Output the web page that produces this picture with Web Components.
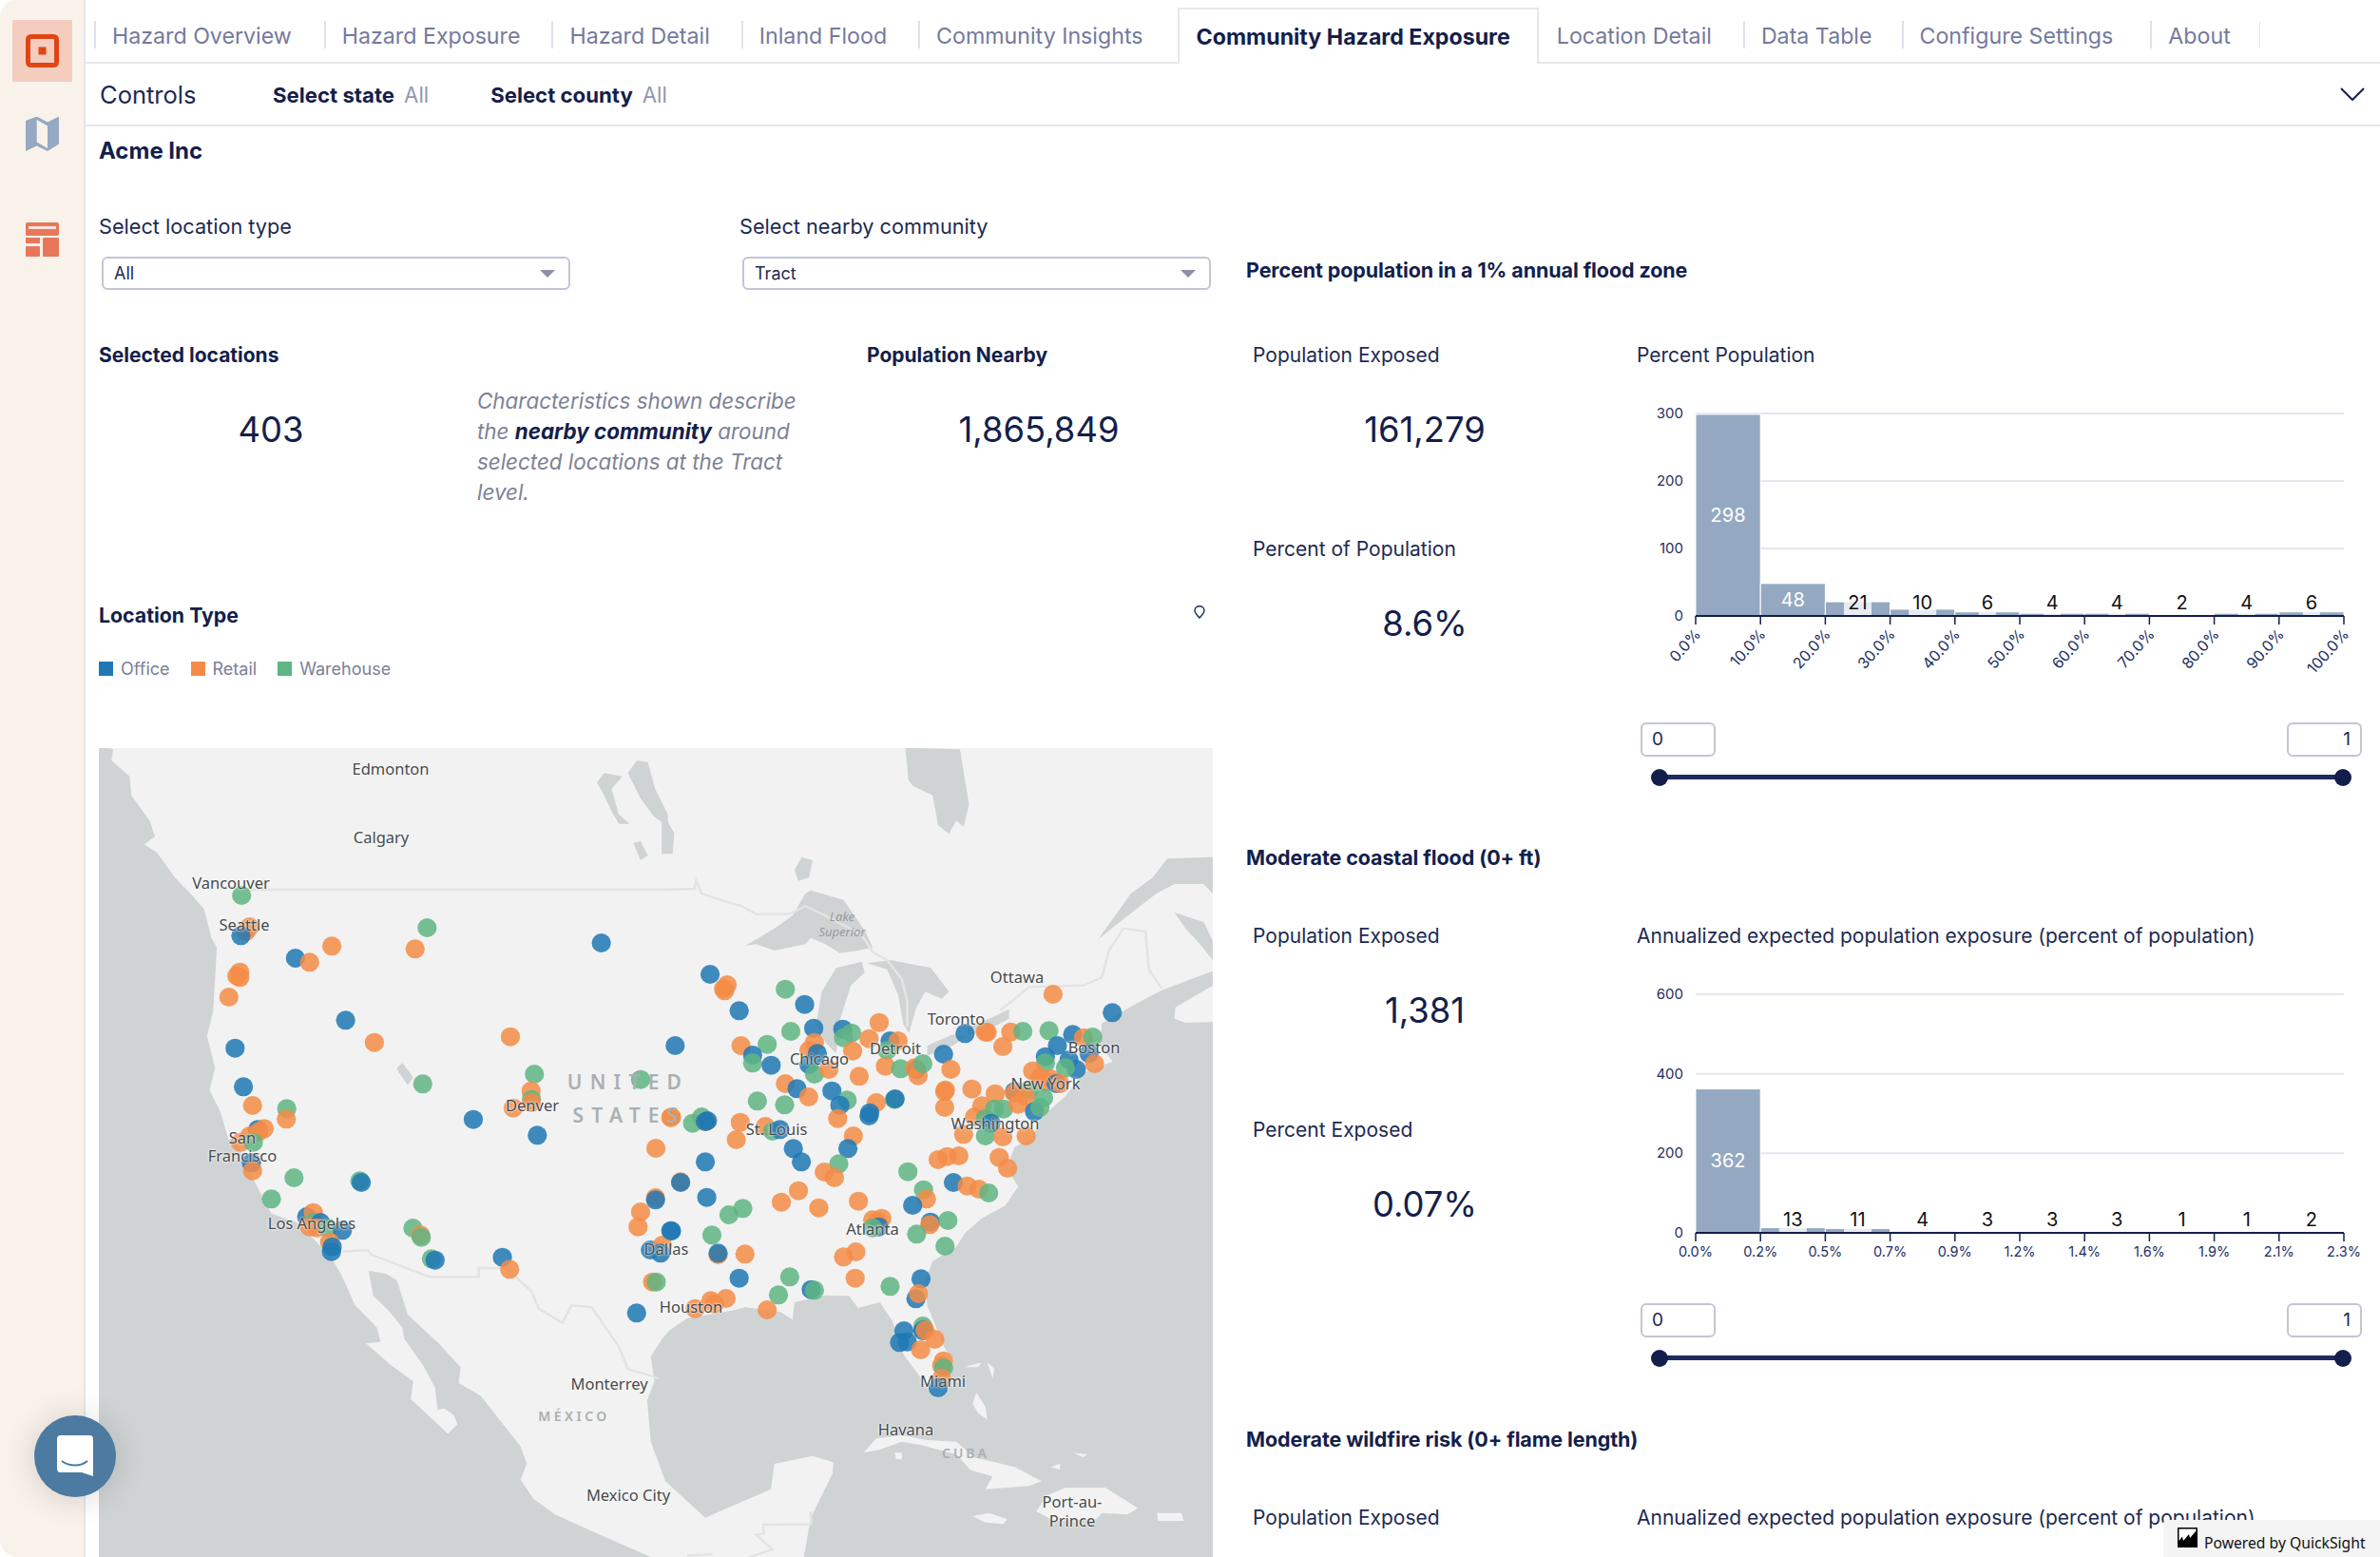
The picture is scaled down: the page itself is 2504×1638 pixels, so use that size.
<!DOCTYPE html>
<html lang="en">
<head>
<meta charset="utf-8">
<title>Community Hazard Exposure</title>
<style>
  html, body { margin: 0; background: #fff; }
  body { font-family: Inter, "Liberation Sans", sans-serif; color: #141e4b; }
</style>
</head>
<body>
<qs-app>
  <qs-sidebar slot="side"></qs-sidebar>
  <qs-tabs slot="top">
    <qs-tab pad="34">Hazard Overview</qs-tab>
    <qs-tab pad="33">Hazard Exposure</qs-tab>
    <qs-tab pad="33">Hazard Detail</qs-tab>
    <qs-tab pad="33">Inland Flood</qs-tab>
    <qs-tab pad="36">Community Insights</qs-tab>
    <qs-tab active pad="28">Community Hazard Exposure</qs-tab>
    <qs-tab nosep pad="33">Location Detail</qs-tab>
    <qs-tab pad="31">Data Table</qs-tab>
    <qs-tab pad="39">Configure Settings</qs-tab>
    <qs-tab pad="31" last>About</qs-tab>
  </qs-tabs>
  <qs-controls slot="top">
    <qs-control name="Select state" value="All"></qs-control>
    <qs-control name="Select county" value="All"></qs-control>
  </qs-controls>
  <qs-location-panel slot="left"></qs-location-panel>
  <qs-exposure slot="right" title="Percent population in a 1% annual flood zone" top="136" gap="60" height="618"
    k1="Population Exposed" v1="161,279" k2="Percent of Population" v2="8.6%" chart="Percent Population">
    <qs-histogram max="300" step="100" scale="0.7117" rotate
      values="298,48,21,10,6,4,4,2,4,6" white="2"
      ticks="0.0%,10.0%,20.0%,30.0%,40.0%,50.0%,60.0%,70.0%,80.0%,90.0%,100.0%"></qs-histogram>
    <qs-range></qs-range>
  </qs-exposure>
  <qs-exposure slot="right" title="Moderate coastal flood (0+ ft)" gap="53" height="612"
    k1="Population Exposed" v1="1,381" k2="Percent Exposed" v2="0.07%"
    chart="Annualized expected population exposure (percent of population)">
    <qs-histogram max="600" step="200" scale="0.4183" label-y="283" base="297"
      values="362,13,11,4,3,3,3,1,1,2" white="1"
      ticks="0.0%,0.2%,0.5%,0.7%,0.9%,1.2%,1.4%,1.6%,1.9%,2.1%,2.3%"></qs-histogram>
    <qs-range></qs-range>
  </qs-exposure>
  <qs-exposure slot="right" title="Moderate wildfire risk (0+ flame length)" gap="53" height="200"
    k1="Population Exposed" chart="Annualized expected population exposure (percent of population)"></qs-exposure>
  <qs-chat slot="over"></qs-chat>
  <qs-powered slot="over"></qs-powered>
</qs-app>

<script>
const NAVY = "#141e4b";
const FONT = 'Inter, "Liberation Sans", sans-serif';

class QsApp extends HTMLElement {
  constructor() {
    super();
    this.attachShadow({ mode: "open" }).innerHTML = `
      <style>
        :host { display: grid; grid-template-columns: 90px 1fr; height: 1638px; width: 2504px; overflow: hidden; position: relative; font-family: ${FONT}; color: ${NAVY}; }
        .main { min-width: 0; display: flex; flex-direction: column; }
        .sheet { display: grid; grid-template-columns: 1172px 1fr; column-gap: 35px; padding-left: 14px; min-height: 0; }
        .right { min-width: 0; }
      </style>
      <slot name="side"></slot>
      <div class="main">
        <slot name="top"></slot>
        <div class="sheet">
          <div><slot name="left"></slot></div>
          <div class="right"><slot name="right"></slot></div>
        </div>
      </div>
      <slot name="over"></slot>`;
  }
}

class QsSidebar extends HTMLElement {
  constructor() {
    super();
    this.attachShadow({ mode: "open" }).innerHTML = `
      <style>
        :host { display: flex; flex-direction: column; box-sizing: border-box; background: #f9f2eb; border-right: 2px solid #e4e6ec; border-radius: 18px 0 0 18px; height: 1638px; padding-top: 21px; }
        .item { width: 63px; margin-left: 13px; display: flex; align-items: center; justify-content: center; }
        .active { height: 65px; background: #f4cdbf; }
        .map { margin-top: 36px; height: 38px; }
        .grid { margin-top: 73px; height: 38px; }
        svg { display: block; }
      </style>
      <div class="item active">
        <svg width="35" height="35" viewBox="0 0 35 35"><rect x="2.5" y="2.5" width="30" height="30" rx="3" fill="none" stroke="#e04514" stroke-width="5"/><rect x="13.5" y="13.5" width="8" height="8" fill="#e04514"/></svg>
      </div>
      <div class="item map">
        <svg width="35" height="36" viewBox="0 0 35 36"><path d="M0 4.500 11.700 0 23 6 35 0V28L23 35.500 11.700 30 0 35.500Z" fill="#95a9c3" stroke="#95a9c3" stroke-linejoin="round"/><path d="M11.700 3 23 9.500V33L11.700 26.500Z" fill="#f9f2eb"/></svg>
      </div>
      <div class="item grid">
        <svg width="35" height="36" viewBox="0 0 35 36"><rect width="35" height="14" rx="2" fill="#e8775a"/><rect x="3" y="4" width="29" height="3" fill="#f9e3da"/><rect y="16" width="15" height="6" fill="#e8775a"/><rect y="25" width="15" height="11" rx="1" fill="#e8775a"/><rect x="18" y="16" width="17" height="20" rx="1" fill="#e8775a"/></svg>
      </div>`;
  }
}

class QsTabs extends HTMLElement {
  constructor() {
    super();
    this.attachShadow({ mode: "open" }).innerHTML = `
      <style>
        :host { display: flex; height: 65px; padding-left: 9px; border-bottom: 2px solid #e6e8ee; box-sizing: content-box; }
      </style>
      <slot></slot>`;
  }
}

class QsTab extends HTMLElement {
  constructor() {
    super();
    this.attachShadow({ mode: "open" }).innerHTML = `
      <style>
        :host { display: flex; align-items: center; height: 65px; box-sizing: border-box; position: relative; padding: 10px var(--pad, 34px) 0 19px; font-size: 23.2px; color: #747a9c; white-space: nowrap; }
        :host::before { content: ""; position: absolute; left: 0; top: 22px; height: 29px; width: 2px; background: #dfe2ea; }
        :host([nosep])::before { display: none; }
        :host([last])::after { content: ""; position: absolute; right: 0; top: 22px; height: 29px; width: 1px; background: #e6e8ee; }
        :host([active]) { height: 59px; margin-top: 8px; padding-top: 0; padding-bottom: 0; color: ${NAVY}; font-weight: 700; background: #fff; border: 2px solid #e6e8ee; border-bottom: 0; padding-left: 18px; }
        :host([active])::before { display: none; }
      </style>
      <slot></slot>`;
  }
  connectedCallback() {
    this.style.setProperty("--pad", (this.getAttribute("pad") || 34) + "px");
  }
}

class QsControls extends HTMLElement {
  constructor() {
    super();
    this.attachShadow({ mode: "open" }).innerHTML = `
      <style>
        :host { display: flex; align-items: center; height: 64px; padding-left: 15px; padding-right: 16px; border-bottom: 2px solid #e6e8ee; }
        .title { font-size: 25.5px; color: #1d2a52; width: 182px; }
        .list { display: flex; gap: 65px; flex: 1; }
        svg { display: block; }
      </style>
      <div class="title">Controls</div>
      <div class="list"><slot></slot></div>
      <svg width="26" height="14" viewBox="0 0 26 14"><path d="M1 1 13 13 25 1" fill="none" stroke="${NAVY}" stroke-width="2"/></svg>`;
  }
}

class QsControl extends HTMLElement {
  constructor() {
    super();
    this.attachShadow({ mode: "open" }).innerHTML = `
      <style>
        :host { display: inline-flex; gap: 10px; font-size: 22.2px; align-items: baseline; }
        b { font-weight: 700; color: ${NAVY}; }
        span { color: #9297b0; }
      </style>
      <b></b><span></span>`;
  }
  connectedCallback() {
    this.shadowRoot.querySelector("b").textContent = this.getAttribute("name");
    this.shadowRoot.querySelector("span").textContent = this.getAttribute("value");
  }
}

class QsSelect extends HTMLElement {
  constructor() {
    super();
    this.attachShadow({ mode: "open" }).innerHTML = `
      <style>
        :host { display: block; }
        .label { font-size: 21.7px; line-height: 30px; color: #1d2a52; margin-bottom: 17px; }
        .box { margin-left: 3px; width: 493px; height: 35px; box-sizing: border-box; border: 2px solid #c3c5d6; border-radius: 6px; display: flex; align-items: center; justify-content: space-between; padding: 0 14px 0 11px; font-size: 18px; color: #1d2a52; }
        .caret { width: 0; height: 0; border-left: 8px solid transparent; border-right: 8px solid transparent; border-top: 8px solid #8c90a8; }
      </style>
      <div class="label"></div>
      <div class="box"><span class="val"></span><span class="caret"></span></div>`;
  }
  connectedCallback() {
    this.shadowRoot.querySelector(".label").textContent = this.getAttribute("label");
    this.shadowRoot.querySelector(".val").textContent = this.getAttribute("value");
  }
}

class QsKpi extends HTMLElement {
  constructor() {
    super();
    this.attachShadow({ mode: "open" }).innerHTML = `
      <style>
        :host { display: block; width: 362px; }
        .label { font-size: 21px; line-height: 30px; color: #1d2a52; }
        :host([strong]) .label { font-weight: 700; color: ${NAVY}; }
        .val { margin-top: 38px; height: 50px; line-height: 50px; font-size: 36.4px; text-align: center; color: ${NAVY}; }
      </style>
      <div class="label"></div>
      <div class="val"></div>`;
  }
  connectedCallback() {
    this.shadowRoot.querySelector(".label").textContent = this.getAttribute("label");
    this.shadowRoot.querySelector(".val").textContent = this.getAttribute("value") || "";
  }
}

class QsLocationPanel extends HTMLElement {
  constructor() {
    super();
    this.attachShadow({ mode: "open" }).innerHTML = `
      <style>
        :host { display: block; }
        h2 { margin: 0; font-size: 24px; line-height: 52px; font-weight: 700; color: ${NAVY}; }
        .filters { margin-top: 38px; display: grid; grid-template-columns: 674px 1fr; }
        .stats { margin-top: 54px; display: grid; grid-template-columns: 362px 374px 362px; column-gap: 36px; height: 273px; }
        .note { margin: 47px 0 0; font-size: 22.4px; line-height: 32px; font-style: italic; color: #7c8296; }
        .note div { white-space: nowrap; }
        .note b { color: ${NAVY}; }
        .type { display: flex; justify-content: space-between; align-items: center; height: 30px; font-size: 21.3px; font-weight: 700; padding-right: 8px; }
        .type svg { margin-top: -7px; }
        .legend { margin-top: 29px; height: 24px; display: flex; gap: 22px; font-size: 18px; color: #7a8099; align-items: center; }
        .legend span { display: flex; align-items: center; gap: 8px; }
        .legend i { width: 15px; height: 15px; display: block; }
        qs-map { margin-top: 72px; }
      </style>
      <h2>Acme Inc</h2>
      <div class="filters">
        <qs-select label="Select location type" value="All"></qs-select>
        <qs-select label="Select nearby community" value="Tract"></qs-select>
      </div>
      <div class="stats">
        <qs-kpi strong label="Selected locations" value="403"></qs-kpi>
        <div class="note">
          <div>Characteristics shown describe</div>
          <div>the <b>nearby community</b> around</div>
          <div>selected locations at the Tract</div>
          <div>level.</div>
        </div>
        <qs-kpi strong label="Population Nearby" value="1,865,849"></qs-kpi>
      </div>
      <div class="type">
        <span>Location Type</span>
        <svg width="12" height="14" viewBox="0 0 12 14"><path d="M6 13C3.500 10 1 8 1 5.200A5 4.500 0 0 1 11 5.200C11 8 8.500 10 6 13Z" fill="#fff" stroke="#1d2a52" stroke-width="1.400"/></svg>
      </div>
      <div class="legend">
        <span><i style="background:#1f78b4"></i>Office</span>
        <span><i style="background:#f58c46"></i>Retail</span>
        <span><i style="background:#5fb583"></i>Warehouse</span>
      </div>
      <qs-map></qs-map>`;
  }
}

// coordinates below are per quadrant of the map, scaled by the group transform
const WATER = {
  nw: [
    "M0 10 50 25 45 60 95 110 100 170 150 250 165 300 135 325 170 350 220 430 270 490 300 530 320 620 335 650 325 850 308 930 330 1030 315 1100 345 1170 365 1250 385 1330 0 1330Z",
    "M1465 100 1490 60 1520 65 1540 150 1575 230 1575 270 1535 235 1500 180Z",
    "M1480 320 1500 315 1520 360 1500 375Z",
    "M1380 130 1400 100 1450 110 1420 150 1440 230 1470 260 1440 260 1420 220 1395 160Z",
    "M830 1030 845 1015 875 1060 860 1085 835 1045Z"
  ],
  ne: [
    "M-10 220 25 290 20 355 -10 355Z",
    "M660 20 810 25 835 200 820 270 800 250 780 292 750 265 735 170 680 140 668 120Z",
    "M355 405 375 365 405 375 395 430 365 440Z",
    "M220 645 300 590 350 550 385 480 400 470 490 500 550 600 570 650 530 660 480 668 440 640 400 620 385 640 300 660 250 640Z",
    "M540 695 470 715 430 790 415 890 440 950 470 985 480 880 510 770 548 730Z",
    "M555 700 620 690 730 715 780 790 760 812 715 790 690 840 670 920 655 895 640 800 610 720Z",
    "M720 960 790 925 830 930 790 960 720 992Z",
    "M830 905 900 870 945 845 945 875 880 915 830 925Z",
    "M1505 365 1380 370 1340 430 1280 480 1190 625 1260 560 1350 480 1400 450 1480 450 1505 480Z",
    "M1400 540 1480 570 1505 630 1505 690 1470 640 1430 590Z",
    "M1505 725 1365 785 1290 830 1200 890 1195 960 1230 1010 1150 1045 1100 1120 1030 1190 1010 1250 960 1280 945 1330 1510 1330 1510 885 1430 888 1400 875 1402 840 1505 770Z"
  ],
  sw: [
    "M0 -5 385 -5 430 110 485 230 560 260 650 370 680 430 715 520 775 590 785 635 745 640 810 705 875 760 868 815 970 925 997 895 985 865 960 845 942 850 935 780 905 715 850 625 845 590 810 540 765 490 752 410 800 420 830 440 860 550 945 640 1005 715 1000 765 1060 805 1170 965 1187 1020 1170 1070 1205 1130 1265 1180 1380 1240 1540 1320 0 1320Z"
  ],
  se: [
    "M1015 -5 960 30 960 60 945 100 970 145 935 205 870 245 825 290 800 335 735 380 715 440 720 520 745 590 770 660 792 690 780 780 750 810 725 790 700 745 655 675 625 570 590 510 530 528 505 490 440 488 355 510 350 565 315 540 250 530 220 525 190 535 60 560 10 600 -8 625 -40 680 -30 760 -50 820 -40 950 0 1075 110 1190 290 1100 300 1020 405 995 462 1015 460 1050 400 1190 380 1320 1510 1320 1510 -5Z"
  ]
};

const ISLANDS = [
  "M545 985 580 940 650 930 720 945 800 950 850 1000 960 1030 1035 1075 1000 1090 880 1100 900 1060 840 1040 800 990 700 960 650 950 590 975Z",
  "M1020 1170 1050 1120 1100 1095 1210 1095 1300 1160 1270 1180 1200 1175 1185 1195 1070 1200Z",
  "M845 1185 890 1175 940 1195 930 1210 880 1205Z",
  "M1352 1175 1420 1175 1425 1200 1355 1200Z",
  "M845 830 855 795 880 840 885 880 860 860Z",
  "M820 715 870 700 860 715Z",
  "M885 700 905 720 900 750Z",
  "M630 985 650 985 650 1005 635 1005Z",
  "M1060 1030 1085 1020 1085 1038Z",
  "M1120 985 1160 990 1150 1000Z"
];

const BORDERS = {
  nw: ["M400 468H1575"],
  ne: ["M-10 468 80 465 85 440 100 480 150 500 210 520 250 545 340 545 385 520 440 550 540 610 570 665 610 690 650 750 665 820 665 900M920 850 1000 775 1150 770 1200 745 1220 660 1260 590 1320 600 1330 720 1365 780"],
  sw: ["M680 350 750 345 760 360 920 430 1055 430 1055 402 1130 402 1200 475 1220 530 1285 575 1310 520 1365 525 1440 650 1465 720 1550 750"],
  se: ["M400 1170 400 1210 270 1212 270 1240 250 1245 295 1290 230 1315M60 1310 130 1305"]
};

const PINS = {
  nw: "g403,486 o425,585 o415,600 b401,613 g913,588 o880,655 o651,646 b551,684 o590,697 b1392,636 o398,728 o390,740 o398,745 o368,807 b689,880 o768,950 o1142,932 b385,968 b408,1090 o433,1149 g527,1159 o526,1192 g901,1081 g1208,1050 o1199,1103 g1200,1130 o1150,1157 o1200,1140 b1040,1193 b1216,1243 g1500,1067 o1542,1284 o1585,1185 b447,1225 o465,1222 o450,1232 o425,1245 o400,1265 g435,1265",
  sw: "b430,70 o433,95 g547,117 g485,184 g728,127 b732,132 b582,240 o600,227 g600,258 o590,272 b620,258 o610,275 g640,275 b680,283 o645,320 b652,335 b650,350 g874,276 o895,298 g897,305 g925,373 b935,377 b1120,368 o1140,406 o1541,180 b1541,187 o1500,225 o1493,272 b1585,285 b1527,345 o1560,330 b1555,355 o1533,446 g1543,446 b1489,544",
  ne: "b123,735 o170,768 o160,780 o163,787 g330,782 b383,830 b203,850 g345,915 b408,905 b488,908 g512,920 g490,935 o588,887 o560,938 b618,945 o640,945 g610,975 o515,977 b27,960 o208,960 g280,956 b240,990 g240,1015 b291,1022 o395,975 o410,950 b418,985 b395,1020 g410,1050 o450,1035 o605,1025 g647,1033 b690,1035 o685,1030 o695,1055 g708,1017 b765,987 o785,1035 o533,1057 o330,1080 b362,1096 o394,1122 b458,1103 g500,1132 b480,1148 o580,1140 b562,1172 b560,1182 g630,1130 b632,1128 g253,1135 g328,1147 o206,1202 o275,1215 g295,1230 b315,1225 o195,1257 g75,1205 g100,1185 o112,1200 b116,1197 b110,1200 o15,1187 o474,1190 o517,1245 b502,1285 b824,922 o880,917 o885,918 o950,917 g983,915 o928,963 g1055,913 o1066,798 b1229,856 b1120,925 o1150,935 g1175,933 b1078,960 b1045,995 b1110,1005 g1045,1015 b1130,1035 b1165,985 o1180,1017 o1030,1060 o1010,1040 o1060,1065 o1045,1075 g1100,1030 g1040,1125 b1075,1080 o1085,1080 b960,1105 g1000,1100 o990,1120 o960,1110 o770,1100 o768,1105 o843,1097 o907,1112 o870,1150 g905,1160 g930,1160 o970,1145 b1015,1168 g1030,1155 o850,1185 g880,1190 b895,1205 o768,1155 o820,1240 g880,1245 o928,1248 o992,1245",
  se: "b110,67 b352,25 b374,67 o42,130 b42,132 g477,73 o437,99 o465,117 g667,98 o750,60 o775,50 o807,48 o918,53 o941,87 b792,132 o830,143 o862,153 g889,165 g710,155 o718,184 b680,204 b729,257 o727,265 g777,252 g691,295 g769,333 o366,158 o319,194 o422,212 o531,191 o570,250 o595,245 o583,255 b587,272 g570,275 b114,179 g175,234 g213,214 b15,284 g128,298 o145,360 b145,355 o219,358 o490,367 o524,351 o522,434 b203,434 g342,430 g311,487 b401,470 g410,472 g618,460 b703,436 b689,499 o696,483 o280,534 o125,505 o167,498 o135,515 o82,530 b656,600 b644,637 b665,635 g708,585 b708,600 b710,597 o714,598 o741,627 o702,660 o765,695 o760,710 g765,717 o760,750 b750,780"
};

const GROUPS = { nw: [100, 780], ne: [700, 780], sw: [100, 1200], se: [700, 1200] };
const PIN_COLOR = { b: "#1f78b4", o: "#f58c46", g: "#5fb583" };

// name, centre x and y on the page
const CITIES = [
  ["Edmonton", 411, 808], ["Calgary", 401, 880], ["Vancouver", 243, 928], ["Seattle", 257, 972],
  ["Denver", 560, 1162], ["San", 255, 1196], ["Francisco", 255, 1215], ["Los Angeles", 328, 1286],
  ["Dallas", 701, 1313], ["Houston", 727, 1374], ["Monterrey", 641, 1455], ["Mexico City", 661, 1572],
  ["Havana", 953, 1503], ["Port-au-", 1128, 1579], ["Prince", 1128, 1599], ["Miami", 992, 1452],
  ["Atlanta", 918, 1292], ["St. Louis", 817, 1187], ["Chicago", 862, 1113], ["Detroit", 942, 1102],
  ["Toronto", 1006, 1071], ["Ottawa", 1070, 1027], ["Boston", 1151, 1101], ["New York", 1100, 1139],
  ["Washington", 1047, 1181]
];

class QsMap extends HTMLElement {
  constructor() {
    super();
    const group = (key, inner) => {
      const [x, y] = GROUPS[key];
      return `<g transform="translate(${x} ${y}) scale(.38265 .33333)">${inner}</g>`;
    };
    const water = Object.keys(WATER).map((k) =>
      group(k, WATER[k].map((d) => `<path d="${d}" fill="#cfd3d4"/>`).join(""))).join("");
    const islands = group("se", ISLANDS.map((d) => `<path d="${d}" fill="#f2f2f2"/>`).join(""));
    const borders = Object.keys(BORDERS).map((k) =>
      group(k, BORDERS[k].map((d) => `<path d="${d}" fill="none" stroke="#e3e4e2" stroke-width="7"/>`).join(""))).join("");
    const pins = Object.keys(PINS).map((k) =>
      group(k, PINS[k].split(" ").map((p) => {
        const [x, y] = p.slice(1).split(",");
        return `<ellipse cx="${x}" cy="${y}" rx="26.500" ry="30" fill="${PIN_COLOR[p[0]]}" opacity=".85"/>`;
      }).join(""))).join("");
    const cities = CITIES.map(([name, x, y]) =>
      `<span class="city" style="left:${x - 104}px;top:${y - 787}px">${name}</span>`).join("");
    this.attachShadow({ mode: "open" }).innerHTML = `
      <style>
        :host { display: block; position: relative; width: 1172px; height: 851px; overflow: hidden; background: #f2f2f2; font-family: "Noto Sans", "Open Sans", sans-serif; }
        svg { display: block; position: absolute; inset: 0; }
        .city { position: absolute; transform: translate(-50%, -50%); font-size: 16.500px; color: #454a4c; white-space: nowrap; text-shadow: 0 0 3px rgba(255,255,255,.9), 0 0 2px rgba(255,255,255,.9); }
        .region { position: absolute; transform: translate(-50%, -50%); color: #abafb0; font-weight: 600; white-space: nowrap; }
        .lake { position: absolute; transform: translate(-50%, -50%); color: #959a9c; font-style: italic; font-size: 13px; line-height: 16px; text-align: center; }
      </style>
      <svg width="1172" height="851" viewBox="104 787 1172 851">${water}${islands}${borders}${pins}</svg>
      <span class="region" style="left:557px;top:351px;font-size:21px;letter-spacing:8.200px">UNITED</span>
      <span class="region" style="left:558px;top:386px;font-size:21px;letter-spacing:8.200px">STATES</span>
      <span class="region" style="left:500px;top:702px;font-size:14px;letter-spacing:3.500px">MÉXICO</span>
      <span class="region" style="left:912px;top:741px;font-size:14px;letter-spacing:3px">CUBA</span>
      <span class="lake" style="left:782px;top:185px"><div>Lake</div><div>Superior</div></span>
      ${cities}`;
  }
}

class QsExposure extends HTMLElement {
  constructor() {
    super();
    this.attachShadow({ mode: "open" }).innerHTML = `
      <style>
        :host { display: block; box-sizing: border-box; overflow: visible; }
        h3 { margin: 0; font-size: 21.5px; line-height: 30px; font-weight: 700; color: ${NAVY}; letter-spacing: -0.1px; }
        .body { display: grid; grid-template-columns: 404px 1fr; padding-left: 7px; }
        .chart-title { font-size: 21px; line-height: 30px; color: #1d2a52; white-space: nowrap; }
      </style>
      <h3></h3>
      <div class="body">
        <div class="kpis"></div>
        <div class="chart"><div class="chart-title"></div><slot></slot></div>
      </div>`;
  }
  connectedCallback() {
    const root = this.shadowRoot;
    const a = (n) => this.getAttribute(n);
    this.style.paddingTop = (a("top") || 0) + "px";
    this.style.height = (+a("height") + +(a("top") || 0)) + "px";
    root.querySelector("h3").textContent = a("title");
    this.removeAttribute("title");
    root.querySelector(".body").style.marginTop = a("gap") + "px";
    root.querySelector(".chart-title").textContent = a("chart");
    const kpis = root.querySelector(".kpis");
    kpis.innerHTML = `<qs-kpi label="${a("k1")}" value="${a("v1") || ""}"></qs-kpi>`;
    if (a("k2")) kpis.innerHTML += `<qs-kpi style="margin-top:86px" label="${a("k2")}" value="${a("v2")}"></qs-kpi>`;
  }
}

class QsHistogram extends HTMLElement {
  connectedCallback() {
    const a = (n) => this.getAttribute(n);
    const left = 62, binW = 68.2, top = 46;
    const base = +(a("base") || 259);
    const scale = +a("scale"), max = +a("max"), step = +a("step");
    const values = a("values").split(",").map(Number);
    const ticks = a("ticks").split(",");
    const whiteCount = +a("white");
    const labelY = +(a("label-y") || 245);
    const rotate = this.hasAttribute("rotate");
    const right = left + binW * 10;
    const pxPerUnit = (base - top) / max;
    let out = "";
    for (let v = 0; v <= max; v += step) {
      const y = base - v * pxPerUnit;
      if (v) out += `<line x1="${left}" x2="${right}" y1="${y}" y2="${y}" stroke="#e6e6ef" stroke-width="2"/>`;
      out += `<text x="49" y="${y + 5}" text-anchor="end" class="axis">${v}</text>`;
    }
    values.forEach((v, i) => {
      const x = left + i * binW;
      const h = Math.max(v * scale, 1.5);
      out += `<rect x="${x}" y="${base - h}" width="${binW}" height="${h}" fill="#94a9c1" stroke="#fff" stroke-width="1"/>`;
      const cx = x + binW / 2;
      if (i < whiteCount) {
        out += `<text x="${cx}" y="${base - h / 2 + 7}" text-anchor="middle" class="in">${v}</text>`;
      } else {
        const w = String(v).length > 1 ? 29 : 18;
        out += `<rect x="${cx - w / 2}" y="${base - h}" width="${w}" height="${h}" fill="#fff" opacity=".78"/>`;
        out += `<text x="${cx}" y="${labelY + 7}" text-anchor="middle" class="out">${v}</text>`;
      }
    });
    out += `<line x1="${left}" x2="${right}" y1="${base}" y2="${base}" stroke="${NAVY}" stroke-width="2"/>`;
    ticks.forEach((t, i) => {
      const x = left + i * binW;
      out += `<line x1="${x}" x2="${x}" y1="${base}" y2="${base + 9}" stroke="${NAVY}" stroke-width="1.500"/>`;
      if (rotate) {
        out += `<text transform="translate(${x + 3} ${base + 17}) rotate(-48)" text-anchor="end" dominant-baseline="middle" class="axis rot">${t}</text>`;
      } else {
        out += `<text x="${x}" y="${base + 25}" text-anchor="middle" class="axis tick">${t}</text>`;
      }
    });
    if (!this.shadowRoot) this.attachShadow({ mode: "open" });
    this.shadowRoot.innerHTML = `
      <style>
        :host { display: block; height: 341px; }
        svg { display: block; overflow: visible; }
        text { font-family: ${FONT}; }
        .axis { font-size: 15px; fill: #232f63; }
        .tick { font-size: 14.500px; }
        .rot { font-size: 16px; }
        .in { font-size: 20px; fill: #fff; }
        .out { font-size: 20px; fill: #111; }
      </style>
      <svg width="782" height="341" viewBox="0 0 782 341">${out}</svg>`;
  }
}

class QsRange extends HTMLElement {
  constructor() {
    super();
    this.attachShadow({ mode: "open" }).innerHTML = `
      <style>
        :host { display: block; box-sizing: border-box; width: 763px; padding-left: 4px; margin-top: 30px; }
        .inputs { display: flex; justify-content: space-between; }
        .input { width: 79px; height: 36px; box-sizing: border-box; border: 2px solid #c3c5d6; border-radius: 6px; font-size: 19px; line-height: 32px; padding: 0 10px; color: #1d2a52; }
        .input.end { text-align: right; }
        .track { position: relative; height: 5px; margin: 19px 20px 0 20px; background: #1d2a5c; }
        .thumb { position: absolute; top: -6.500px; width: 18px; height: 18px; border-radius: 50%; background: #141e4b; }
        .thumb.a { left: -9px; }
        .thumb.b { right: -9px; }
      </style>
      <div class="inputs"><div class="input">0</div><div class="input end">1</div></div>
      <div class="track"><span class="thumb a"></span><span class="thumb b"></span></div>`;
  }
}

class QsChat extends HTMLElement {
  constructor() {
    super();
    this.attachShadow({ mode: "open" }).innerHTML = `
      <style>
        :host { position: absolute; left: 36px; top: 1489px; width: 86px; height: 86px; border-radius: 50%; background: #4d7aa0; box-shadow: 0 2px 34px rgba(0,0,0,.16); display: flex; align-items: center; justify-content: center; }
        svg { display: block; }
      </style>
      <svg width="40" height="44" viewBox="0 0 40 44"><path d="M4 0H36A4 4 0 0 1 39 4V43L27 39H4A4 4 0 0 1 1 35V4A4 4 0 0 1 4 0Z" fill="#fff"/><path d="M6 27C14 33 26 33 33 27" fill="none" stroke="#4d7aa0" stroke-width="2"/></svg>`;
  }
}

class QsPowered extends HTMLElement {
  constructor() {
    super();
    this.attachShadow({ mode: "open" }).innerHTML = `
      <style>
        :host { position: absolute; left: 2276px; top: 1599px; width: 228px; height: 39px; box-sizing: border-box; background: #f4f4f4; border-radius: 4px 0 0 0; display: flex; align-items: center; gap: 7px; padding-left: 15px; font-family: "Noto Sans", sans-serif; font-size: 15.700px; color: #111; }
        svg { display: block; margin-top: -3px; }
        span { white-space: nowrap; margin-top: 8px; }
      </style>
      <svg width="21" height="21" viewBox="0 0 21 21"><path d="M0 0H21V21H0Z" fill="#000"/><path d="M1.500 1.500H19.500V3.500L13 11 12 7 6 14 5 9.500 1.500 14Z" fill="#fff"/></svg>
      <span>Powered by QuickSight</span>`;
  }
}

customElements.define("qs-app", QsApp);
customElements.define("qs-sidebar", QsSidebar);
customElements.define("qs-tabs", QsTabs);
customElements.define("qs-tab", QsTab);
customElements.define("qs-controls", QsControls);
customElements.define("qs-control", QsControl);
customElements.define("qs-select", QsSelect);
customElements.define("qs-kpi", QsKpi);
customElements.define("qs-map", QsMap);
customElements.define("qs-location-panel", QsLocationPanel);
customElements.define("qs-histogram", QsHistogram);
customElements.define("qs-range", QsRange);
customElements.define("qs-exposure", QsExposure);
customElements.define("qs-chat", QsChat);
customElements.define("qs-powered", QsPowered);
</script>
</body>
</html>
